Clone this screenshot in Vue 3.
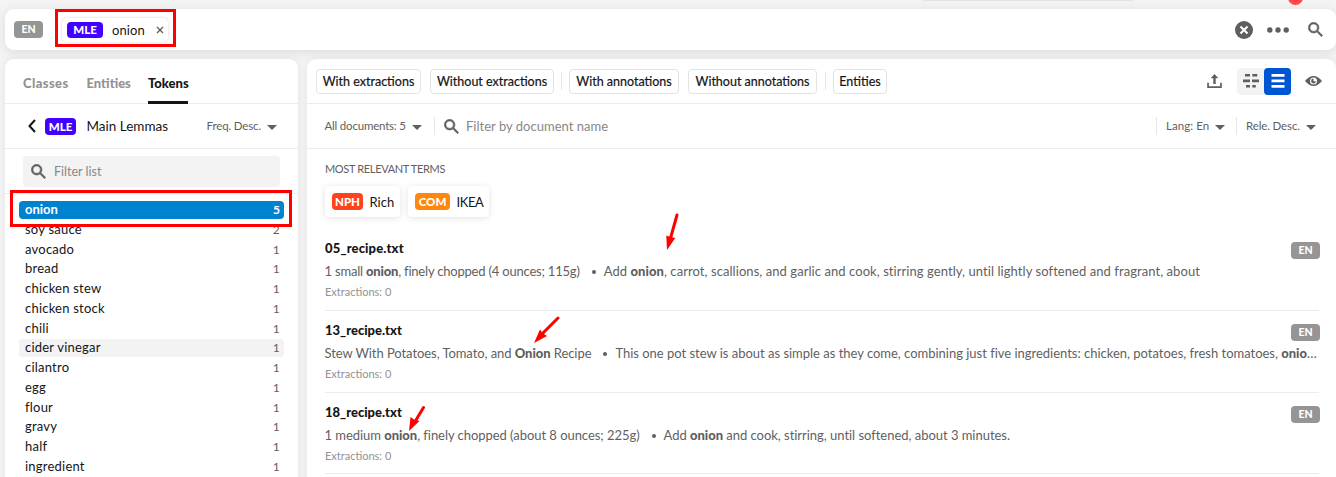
<script setup>
const tokens = [
  ['onion', 5], ['soy sauce', 2], ['avocado', 1], ['bread', 1], ['chicken stew', 1],
  ['chicken stock', 1], ['chili', 1], ['cider vinegar', 1], ['cilantro', 1], ['egg', 1],
  ['flour', 1], ['gravy', 1], ['half', 1], ['ingredient', 1],
]
const docs = [
  {
    name: '05_recipe.txt', cls: 'd1',
    a: ['1 small ', 'onion', ', finely chopped (4 ounces; 115g)'],
    b: ['Add ', 'onion', ', carrot, scallions, and garlic and cook, stirring gently, until lightly softened and fragrant, about', ''],
  },
  {
    name: '13_recipe.txt', cls: 'd2',
    a: ['Stew With Potatoes, Tomato, and ', 'Onion', ' Recipe'],
    b: ['This one pot stew is about as simple as they come, combining just five ingredients: chicken, potatoes, fresh tomatoes, ', 'onio', '…'],
  },
  {
    name: '18_recipe.txt', cls: 'd3',
    a: ['1 medium ', 'onion', ', finely chopped (about 8 ounces; 225g)'],
    b: ['Add ', 'onion', ' and cook, stirring, until softened, about 3 minutes.'],
  },
]
</script>

<template>
  <div class="app">
    <div class="strip"></div>
    <div class="dot"></div>

    <header class="search">
      <span class="tag grey en">EN</span>
      <div class="chip">
        <span class="tag violet mle">MLE</span>
        <span class="chip-text">onion</span>
        <svg class="x" viewBox="0 0 8 8"><path d="M1 1l6 6M7 1l-6 6" /></svg>
      </div>
      <div class="search-icons">
        <svg width="18" height="18" viewBox="0 0 18 18"><circle cx="9" cy="9" r="9" fill="#5f5f5f" /><path d="M5.500 5.500l7 7M12.500 5.500l-7 7" stroke="#fff" stroke-width="2" /></svg>
        <svg class="dots" width="22" height="6" viewBox="0 0 22 6" fill="#5f5f5f"><circle cx="2.800" cy="3" r="2.700" /><circle cx="11" cy="3" r="2.700" /><circle cx="19.200" cy="3" r="2.700" /></svg>
        <svg class="glass" width="15" height="15" viewBox="2.600 2.600 18.300 18.300"><path d="M15.500 14h-.79l-.28-.27A6.470 6.470 0 0 0 16 9.500 6.500 6.500 0 1 0 9.500 16c1.610 0 3.090-.59 4.230-1.570l.27.28v.79l5 4.990L20.490 19l-4.990-5zm-6 0a4.500 4.500 0 1 1 0-9 4.500 4.500 0 0 1 0 9z" /></svg>
      </div>
    </header>

    <div class="columns">
      <aside class="panel side">
        <nav class="tabs">
          <span class="t1">Classes</span><span class="t2">Entities</span><span class="t3 on">Tokens</span>
        </nav>
        <div class="group">
          <svg class="back" width="8" height="14" viewBox="0 0 8 14"><path d="M7 1L1.500 7 7 13" /></svg>
          <span class="tag violet small">MLE</span>
          <span class="group-name">Main Lemmas</span>
          <span class="freq">Freq. Desc.</span>
          <i class="caret"></i>
        </div>
        <div class="filter-wrap">
          <div class="filter">
            <svg class="glass" width="15" height="15" viewBox="2.600 2.600 18.300 18.300"><path d="M15.500 14h-.79l-.28-.27A6.470 6.470 0 0 0 16 9.500 6.500 6.500 0 1 0 9.500 16c1.610 0 3.090-.59 4.230-1.570l.27.28v.79l5 4.990L20.490 19l-4.990-5zm-6 0a4.500 4.500 0 1 1 0-9 4.500 4.500 0 0 1 0 9z" /></svg>
            <span>Filter list</span>
          </div>
        </div>
        <ul class="list">
          <li v-for="([name, n], i) in tokens" :key="name" :class="{ active: i === 0, hover: i === 7 }">
            <div class="row"><span>{{ name }}</span><b>{{ n }}</b></div>
          </li>
        </ul>
      </aside>

      <main class="panel main">
        <div class="toolbar">
          <span class="btn b1">With extractions</span>
          <span class="btn b2">Without extractions</span>
          <i class="sep"></i>
          <span class="btn b3">With annotations</span>
          <span class="btn b4">Without annotations</span>
          <i class="sep s3"></i>
          <span class="btn b5">Entities</span>
          <div class="tools">
            <svg class="upload" width="15" height="14" viewBox="0 0 15 14" fill="#5f5f5f"><path d="M7.500 0L3.700 4.200h2.600V10h2.400V4.200h2.600zM.2 8.700h1.700v3.500h11.200V8.700h1.700V14H.2z" /></svg>
            <div class="toggle">
              <span class="half"><svg width="16" height="14" viewBox="0 0 16 14" fill="#5f5f5f"><path d="M2 0h5v2.600H2zM9.300 0h5v2.600h-5zM0 5.500h7v2.800H0zM9 5.500h7v2.800H9zM3 11h4v2.600H3zM9.300 11h3.500v2.600H9.300z" /></svg></span>
              <span class="half blue"><svg width="14" height="14" viewBox="0 0 14 14" fill="#fff"><path d="M.5 0h13v2.800H.5zM.5 5.500h13v2.800H.5zM.5 11h13v2.800H.5z" /></svg></span>
            </div>
            <svg width="17" height="10" viewBox="0 0 17 10"><path d="M0 5Q8.500-5 17 5 8.500 15 0 5z" fill="#5f5f5f" /><circle cx="8.500" cy="5" r="3.500" fill="#fff" /><path d="M8.500 2.600v2.600h2.400a2.400 2.400 0 1 1-2.400-2.600z" fill="#5f5f5f" /></svg>
          </div>
        </div>

        <div class="subbar">
          <span class="all">All documents: 5</span><i class="caret"></i>
          <i class="sep"></i>
          <svg class="glass" width="15" height="15" viewBox="2.600 2.600 18.300 18.300"><path d="M15.500 14h-.79l-.28-.27A6.470 6.470 0 0 0 16 9.500 6.500 6.500 0 1 0 9.500 16c1.610 0 3.090-.59 4.230-1.570l.27.28v.79l5 4.990L20.490 19l-4.990-5zm-6 0a4.500 4.500 0 1 1 0-9 4.500 4.500 0 0 1 0 9z" /></svg>
          <span class="by">Filter by document name</span>
          <div class="sorts">
            <i class="sep"></i><span class="lang">Lang: En</span><i class="caret"></i>
            <i class="sep"></i><span class="rele">Rele. Desc.</span><i class="caret"></i>
          </div>
        </div>

        <section class="terms">
          <h4>MOST RELEVANT TERMS</h4>
          <div class="cards">
            <div class="card rich"><span class="tag small red">NPH</span><span>Rich</span></div>
            <div class="card ikea"><span class="tag small orange">COM</span><span>IKEA</span></div>
          </div>
        </section>

        <article v-for="d in docs" :key="d.name" class="doc" :class="d.cls">
          <h3>{{ d.name }}</h3>
          <p><span class="a">{{ d.a[0] }}<b>{{ d.a[1] }}</b>{{ d.a[2] }}</span><i class="bullet"></i><span class="b">{{ d.b[0] }}<b>{{ d.b[1] }}</b>{{ d.b[2] }}</span></p>
          <small>Extractions: 0</small>
          <span class="tag grey en">EN</span>
        </article>
      </main>
    </div>

    <!-- Annotations laid over the interface -->
    <div class="frame f1"></div>
    <div class="frame f2"></div>
    <svg class="arrows" width="1336" height="477" viewBox="0 0 1336 477">
      <g stroke="#f00" stroke-width="3" stroke-linecap="round">
        <path d="M677 215L670 240M558 318L543 333M423.500 407.500L416 420" />
      </g>
      <path fill="#f00" d="M667 250l-.7-14.500 4 1.500 5 1zM534 343l6-13.500 2.500 3.500 4.500 3zM409 431l1.500-14 3.500 2.500 5.500 1.500z" />
    </svg>
  </div>
</template>

<style>
body { margin: 0; overflow: hidden; }
</style>

<style scoped>
.app { position: relative; width: 1336px; height: 477px; overflow: hidden; background: #f4f4f4; font: 13px/18px Lato, "Open Sans", sans-serif; color: #151515; box-sizing: border-box; padding: 9px 0 0 5px; white-space: nowrap; }
.app *, .app { box-sizing: border-box; }
.strip { position: absolute; left: 922px; top: -3px; width: 212px; height: 4px; background: #e3e3e3; border-radius: 3px; }
.dot { position: absolute; left: 1288px; top: -10px; width: 15px; height: 15px; border-radius: 50%; background: #ff4a4a; }
svg { display: block; flex: none; }
.glass { fill: #5f5f5f; stroke: #5f5f5f; stroke-width: .7; }
.search { display: flex; align-items: center; height: 41px; padding: 0 13px 0 9px; background: #fff; border-radius: 9px; box-shadow: 0 2px 12px rgba(0, 0, 0, .1); }
.tag { display: flex; align-items: center; justify-content: center; flex: none; border-radius: 4px; color: #fff; font-size: 11.500px; font-weight: 900; line-height: 17px; height: 17px; }
.tag.en { width: 29px; font-size: 10.500px; }
.grey { background: #959595; }
.violet { background: #4100ff; }
.red { background: #ff431c; }
.orange { background: #ff870a; }
.mle { width: 36px; height: 16px; }
.chip { display: flex; align-items: center; width: 106px; height: 24px; margin-left: 19px; padding-left: 5px; border-radius: 5px; box-shadow: 0 0 3px rgba(0, 0, 0, .17); }
.chip-text { width: 33px; margin-left: 9px; font-size: 13px; letter-spacing: .1px; }
.x { width: 8px; height: 8px; margin-left: 11px; stroke: #5f5f5f; stroke-width: 1.400; }
.search-icons { display: flex; align-items: center; margin-left: auto; }
.dots { margin: 0 19px 0 14px; }
.columns { display: flex; gap: 9px; margin-top: 9px; }
.panel { background: #fff; height: 430px; border-radius: 9px 9px 0 0; box-shadow: 0 0 8px rgba(0, 0, 0, .07); }
.side { width: 293px; flex: none; }
.tabs { display: flex; height: 45px; padding: 0 18px; border-bottom: 1px solid #ececec; font-weight: 900; color: #929292; line-height: 48px; }
.tabs span { height: 45px; }
.t1 { width: 46px; margin-right: 17.500px; letter-spacing: .4px; }
.t2 { width: 44px; margin-right: 17.500px; }
.t3 { width: 40px; }
.tabs .on { color: #151515; border-bottom: 3px solid #151515; }
.group { display: flex; align-items: center; height: 45px; padding: 0 21px 0 23px; border-bottom: 1px solid #ececec; }
.back { fill: none; stroke: #151515; stroke-width: 2; }
.tag.small { width: 31px; margin-left: 9px; }
.group-name { margin-left: 10.500px; font-size: 13.500px; }
.freq { margin-left: auto; font-size: 11.500px; letter-spacing: -.15px; color: #5f5f5f; }
.caret { flex: none; width: 0; height: 0; border: 5px solid transparent; border-top-color: #5f5f5f; border-bottom: 0; margin: 2px 0 0 6px; }
.filter-wrap { height: 45px; padding: 7px 18px; border-bottom: 1px solid #ececec; }
.filter { display: flex; align-items: center; gap: 8px; height: 31px; padding: 0 8px; border-radius: 4px; background: #f3f3f3; color: #888; font-size: 12.500px; }
.list { list-style: none; margin: 0; padding: 7px 14px; }
.list li { height: 19.750px; }
.row { display: flex; justify-content: space-between; height: 18px; line-height: 17px; padding: 0 4px 0 6px; border-radius: 4px; letter-spacing: .22px; }
.row b { font-weight: 400; font-size: 12px; color: #5f5f5f; }
.hover .row { background: #f3f3f3; }
.active .row { background: #0082cf; color: #fff; font-weight: 700; letter-spacing: 0; }
.active .row b { color: #fff; font-weight: 700; }
.main { flex: 1; min-width: 0; }
.toolbar { display: flex; align-items: center; height: 45px; padding: 0 14px 0 9px; border-bottom: 1px solid #ececec; }
.btn { height: 25px; border: 1px solid #e3e3e3; border-radius: 4px; text-align: center; font-size: 12.500px; line-height: 23px; -webkit-text-stroke: .2px #151515; }
.b1 { width: 105px; margin-right: 9px; }
.b2 { width: 124px; }
.b3 { width: 110px; margin-right: 9px; }
.b4 { width: 129px; }
.b5 { width: 54px; }
.sep { flex: none; width: 1px; height: 18px; margin: 0 7px; background: #e6e6e6; }
.s3 { margin: 0 7px 0 8px; }
.tools { display: flex; align-items: center; gap: 14px; margin-left: auto; }
.upload { margin-right: 1px; }
.toggle { display: flex; border-radius: 4px; background: #f3f3f3; }
.half { display: flex; align-items: center; justify-content: center; width: 27px; height: 27px; border-radius: 4px; }
.blue { background: #0056d2; }
.subbar { display: flex; align-items: center; height: 45px; padding: 0 20px 0 17.500px; border-bottom: 1px solid #ececec; color: #5f5f5f; font-size: 11.500px; }
.all { width: 81.500px; letter-spacing: -.2px; }
.subbar .caret { margin-left: 5.500px; }
.subbar .sep { margin: 0 9px 0 12px; }
.by { margin-left: 7.500px; color: #888; font-size: 13px; letter-spacing: .02px; }
.sorts { display: flex; align-items: center; margin-left: auto; }
.sorts .caret { margin-left: 6px; }
.subbar .sorts .sep { margin: 0 9px 0 11px; }
.lang { width: 43px; letter-spacing: .05px; }
.rele { width: 54px; letter-spacing: -.13px; }
.terms { padding: 11px 18px 0; }
.terms h4 { margin: 0; font-size: 11px; font-weight: 400; color: #5f5f5f; line-height: 18px; letter-spacing: -.34px; }
.cards { display: flex; gap: 8px; margin-top: 8px; }
.card { display: flex; align-items: center; height: 31px; border-radius: 4px; box-shadow: 0 1px 6px rgba(0, 0, 0, .12); font-size: 13px; }
.card .tag { margin: 0 6.500px 0 7px; }
.rich { width: 75px; }
.ikea { width: 81px; letter-spacing: -.4px; }
.card.ikea .tag { width: 35px; margin-left: 7px; letter-spacing: 0; }
.doc { position: relative; height: 82px; margin: 0 17px 0 18px; border-bottom: 1px solid #ececec; }
.d1 { margin-top: 12px; }
.d3 { height: 81px; }
.doc h3 { margin: 0; padding-top: 10px; font-size: 13px; line-height: 18px; font-weight: 900; }
.doc p { display: flex; align-items: center; margin: 5px 0 0; line-height: 18px; color: #5f5f5f; }
.doc span { white-space: pre; }
.doc p span { margin-left: -.5px; }
.d1 h3 { letter-spacing: .15px; }
.d1 .a { letter-spacing: -.2px; }
.d1 .b { letter-spacing: .065px; }
.d2 .a { letter-spacing: -.065px; }
.d2 .b { letter-spacing: -.015px; }
.d3 .a { letter-spacing: -.045px; }
.d3 .b { letter-spacing: -.03px; }
.bullet { flex: none; width: 4px; height: 4px; margin: 2px 8.500px 0 12px; border-radius: 50%; background: #5f5f5f; }
.doc b { font-weight: 900; }
.doc small { display: block; margin-top: 4px; font-size: 11px; line-height: 16px; color: #929292; }
.doc .tag { position: absolute; right: -1px; top: 13px; }
.frame { position: absolute; border: 3px solid #f00; }
.f1 { left: 55px; top: 9px; width: 121px; height: 38px; }
.f2 { left: 10px; top: 190px; width: 282px; height: 37px; }
.arrows { position: absolute; left: 0; top: 0; }
</style>
